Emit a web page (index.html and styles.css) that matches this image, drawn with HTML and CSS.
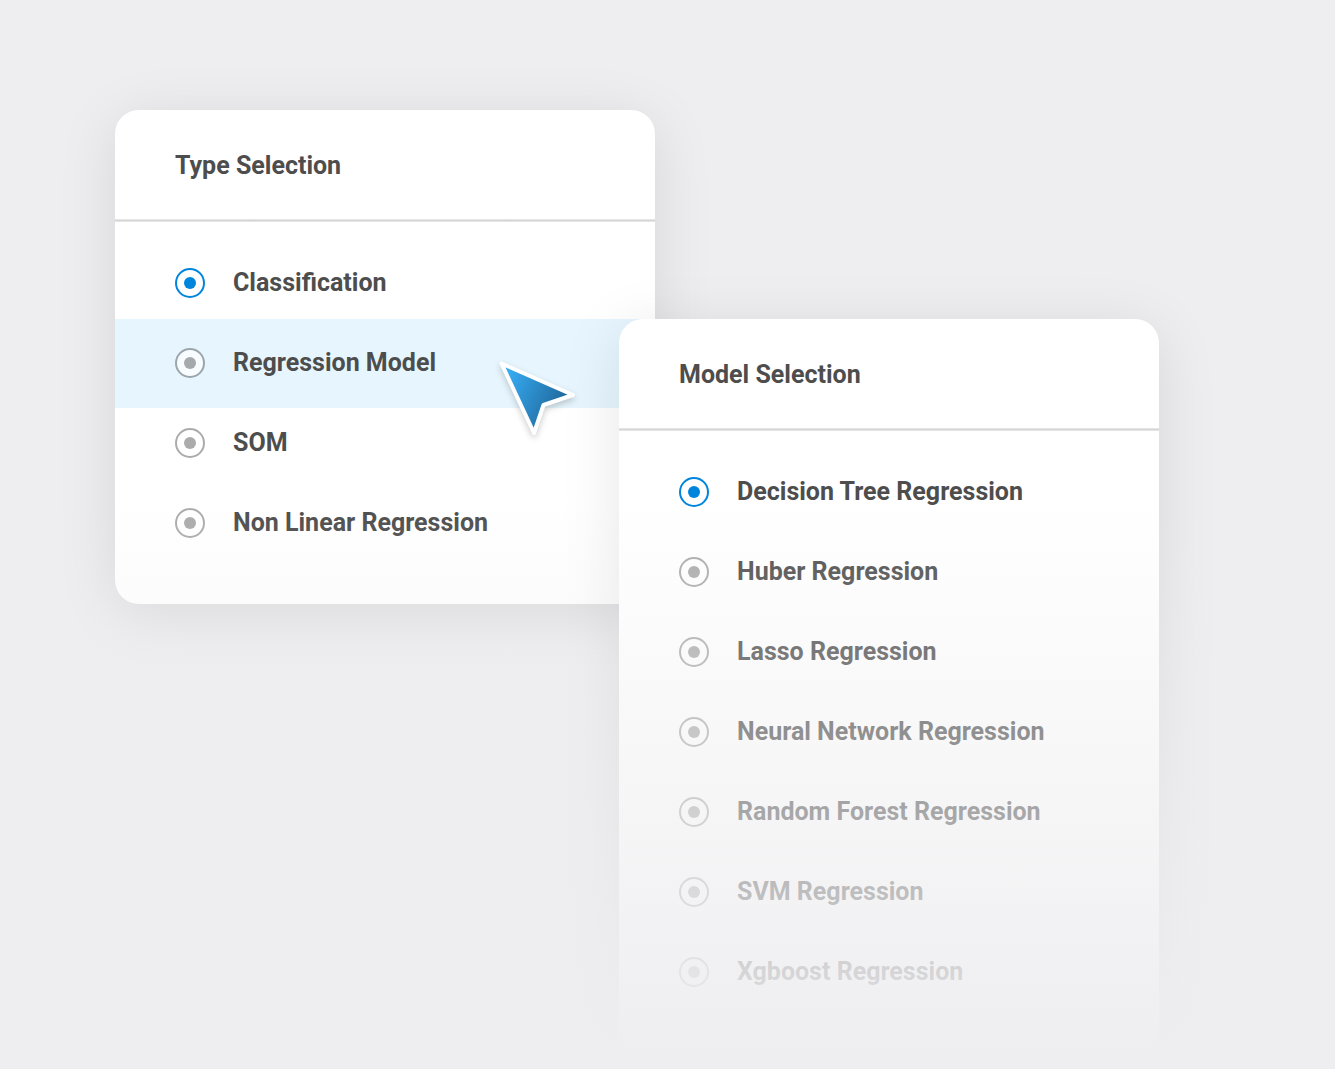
FILE: index.html
```html
<!DOCTYPE html>
<html lang="en">
<head>
    <meta charset="UTF-8">
    <meta name="viewport" content="width=device-width, initial-scale=1.0">
    <title>Model Selection</title>
    <link rel="stylesheet" href="styles.css">
</head>
<body>
    <main class="panels">
        <section class="card">
            <h2>Type Selection</h2>
            <div class="options">
                <label class="option"><input type="radio" name="type" checked>Classification</label>
                <label class="option active"><input type="radio" name="type">Regression Model</label>
                <label class="option"><input type="radio" name="type">SOM</label>
                <label class="option"><input type="radio" name="type">Non Linear Regression</label>
            </div>
            <svg class="cursor" width="90" height="90" viewBox="0 0 90 90" aria-hidden="true">
                <defs>
                    <linearGradient id="cursorFill" x1="0" y1="0.1" x2="0.9" y2="0.5">
                        <stop offset="0.1" stop-color="#37abf2"/>
                        <stop offset="1" stop-color="#20699d"/>
                    </linearGradient>
                </defs>
                <path d="M6.5 8.5 L78 40 L48.5 50 L39 78 Z" fill="url(#cursorFill)" stroke="#fff" stroke-width="4" stroke-linejoin="round"/>
            </svg>
        </section>
        <section class="card card-model">
            <h2>Model Selection</h2>
            <div class="options">
                <label class="option"><input type="radio" name="model" checked>Decision Tree Regression</label>
                <label class="option"><input type="radio" name="model">Huber Regression</label>
                <label class="option"><input type="radio" name="model">Lasso Regression</label>
                <label class="option"><input type="radio" name="model">Neural Network Regression</label>
                <label class="option"><input type="radio" name="model">Random Forest Regression</label>
                <label class="option"><input type="radio" name="model">SVM Regression</label>
                <label class="option"><input type="radio" name="model">Xgboost Regression</label>
            </div>
        </section>
        <div class="fade"></div>
    </main>
</body>
</html>
```
FILE: styles.css
```css
* {
    box-sizing: border-box;
}
body {
    margin: 0;
    background-color: #eeeef0;
    color: #4d4d4d;
    font-family: Roboto, "Liberation Sans", sans-serif;
    font-size: 25px;
    font-weight: 700;
    line-height: 30px;
}
.panels {
    position: relative;
    display: flex;
    align-items: flex-start;
    min-height: 100vh;
    padding: 110px 176px 0 115px;
    overflow: hidden;
}
.card {
    position: relative;
    flex: 1;
    min-width: 0;
    background-color: #fff;
    border-radius: 24px;
    box-shadow: 0 10px 60px rgba(0, 0, 0, 0.1);
}
/* second card sits over the right edge of the first */
.card-model {
    margin-top: 209px;
    margin-left: -36px;
}
.card h2 {
    margin: 0;
    padding: 41px 60px;
    background: linear-gradient(#ececec, #d6d6d6, #ececec) bottom / 100% 3px no-repeat;
    font-size: 25px;
    font-weight: 700;
}
.options {
    padding: 21px 0 41px;
}
.option {
    display: flex;
    align-items: center;
    gap: 28px;
    height: 80px;
    padding: 0 60px;
}
.option.active {
    height: 89px;
    margin: -4px 0 -5px;
    padding-bottom: 1px;
    background-color: #e7f6fe;
}
.option input {
    appearance: none;
    display: grid;
    place-items: center;
    flex: none;
    width: 30px;
    height: 30px;
    margin: 0;
    border: 2px solid;
    border-radius: 50%;
    background: rgba(255, 255, 255, 0.7) padding-box;
    color: rgba(0, 0, 0, 0.33);
}
.option input::before {
    content: "";
    width: 12px;
    height: 12px;
    border-radius: 50%;
    background-color: currentColor;
}
.option input:checked {
    color: #0085dc;
}
.cursor {
    position: absolute;
    top: 245px;
    left: 380px;
    filter: drop-shadow(0 3px 3px rgba(0, 0, 0, 0.2));
}
/* lower part of the list dissolves into the background */
.fade {
    position: absolute;
    inset: 500px 0 0;
    background: linear-gradient(rgba(238, 238, 240, 0), #eeeef0 560px);
    pointer-events: none;
}
```
